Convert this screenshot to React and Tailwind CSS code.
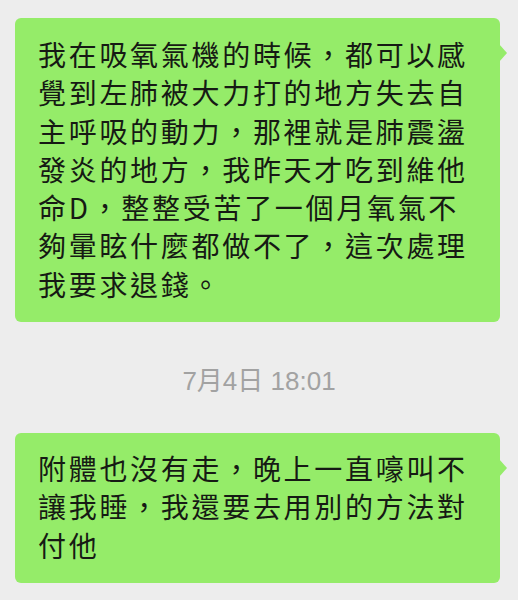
import React from "react";

const font = { fontFamily: '"Noto Sans CJK TC", "Noto Sans CJK SC", "Noto Sans", sans-serif' };

function Bubble({ lines, className }) {
  return (
    <div className={"relative ml-[15px] w-[485px] rounded-[6px] bg-[#95ec69] pl-[23px] " + className}>
      <div className="absolute right-[-7px] top-[26px] h-0 w-0 border-y-[9px] border-l-[8px] border-y-transparent border-l-[#95ec69]" />
      {lines.map((l, i) => (
        <div key={i} className="whitespace-nowrap text-[28px] leading-[38.3px] tracking-[2.7px] text-[#161a14]">
          {l}
        </div>
      ))}
    </div>
  );
}

export default function App() {
  return (
    <div className="h-[600px] w-[518px] overflow-hidden bg-[#ededed] pt-[18px]" style={font}>
      <Bubble
        className="pt-[17px] pb-[19px]"
        lines={[
          "我在吸氧氣機的時候，都可以感",
          "覺到左肺被大力打的地方失去自",
          "主呼吸的動力，那裡就是肺震盪",
          "發炎的地方，我昨天才吃到維他",
          "命D，整整受苦了一個月氧氣不",
          "夠暈眩什麼都做不了，這次處理",
          "我要求退錢。",
        ]}
      />
      <div
        className="mt-[44px] mb-[37px] text-center text-[26px] leading-[30px] text-[#a2a2a2]"
        style={{ fontFamily: '"Liberation Sans", "Noto Sans CJK TC", sans-serif' }}
      >
        7月4日 18:01
      </div>
      <Bubble
        className="pt-[16px] pb-[19px]"
        lines={[
          "附體也沒有走，晚上一直嚎叫不",
          "讓我睡，我還要去用別的方法對",
          "付他",
        ]}
      />
    </div>
  );
}
